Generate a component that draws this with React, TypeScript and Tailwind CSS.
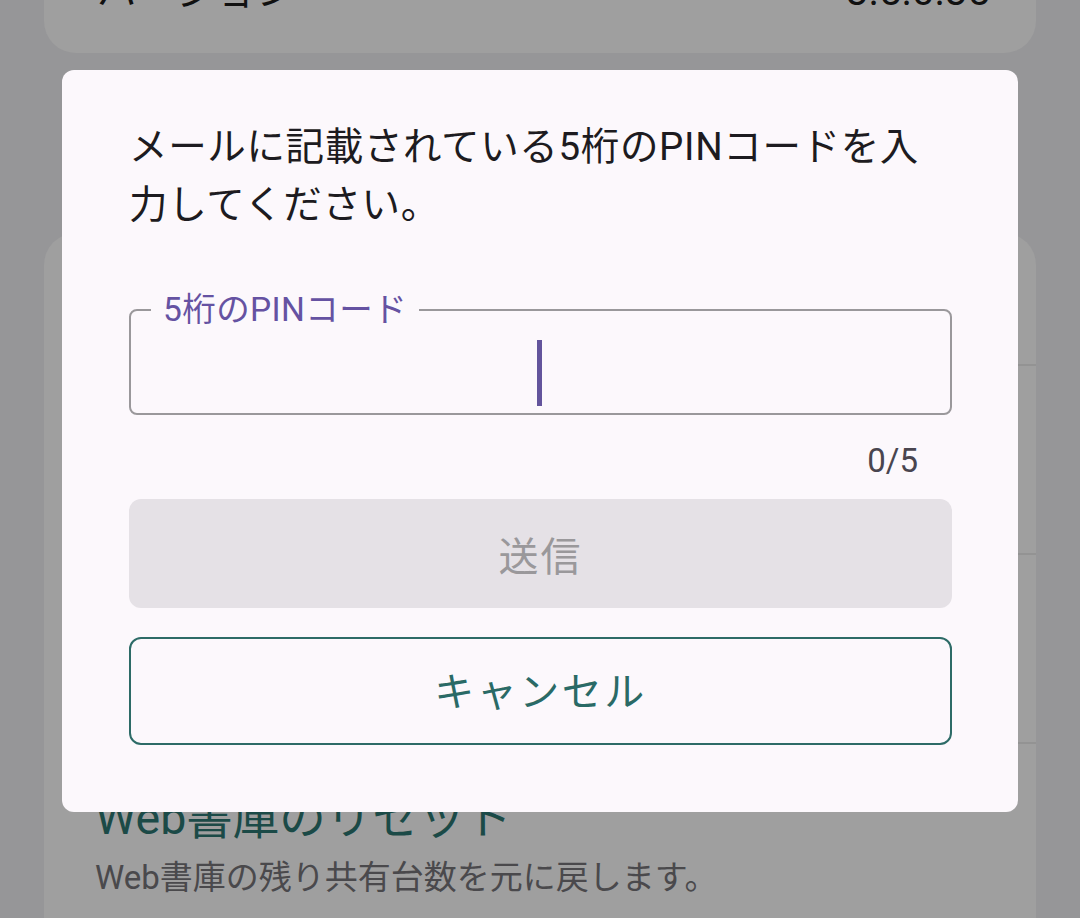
import React from "react";

export default function App() {
  return (
    <div className="relative w-[1080px] h-[918px] overflow-hidden bg-[#969698] font-['Roboto','Noto_Sans_CJK_JP',sans-serif]">
      {/* background page */}
      <div className="flex flex-col px-[44px]">
        <div className="-mt-[80px] rounded-[32px] bg-[#9f9f9f] pt-[48px] pb-[37px] pl-[53px] pr-[46px] flex items-center justify-between">
          <span className="text-[40px] leading-[48px] text-[#111111]">バージョン</span>
          <span className="text-[40px] leading-[48px] text-[#111111]">3.5.0.35</span>
        </div>
        <div className="mt-[180px] rounded-t-[32px] bg-[#9f9f9f] flex flex-col pb-[60px]">
          <div className="h-[131px]" />
          <div className="ml-[51px] h-[2px] bg-[#939393]" />
          <div className="h-[187px]" />
          <div className="ml-[51px] h-[2px] bg-[#939393]" />
          <div className="h-[187px]" />
          <div className="ml-[51px] h-[2px] bg-[#939393]" />
          <div className="pt-[46px] pl-[51px] flex flex-col">
            <span className="text-[46.5px] leading-[56px] text-[#1b4a47]">Web書庫のリセット</span>
            <span className="mt-[10px] text-[33px] leading-[44px] text-[#4a494c]">Web書庫の残り共有台数を元に戻します。</span>
          </div>
        </div>
      </div>

      {/* dialog */}
      <div className="absolute left-[62px] top-[70px] w-[956px] h-[742px] rounded-[12px] bg-[#fcf8fc] pl-[67px] pr-[66px] pt-[48px] flex flex-col">
        <p className="text-[38.5px] leading-[58px] tracking-[0.65px] text-[#1d1b20] whitespace-nowrap">
          メールに記載されている5桁のPINコードを入
          <br />
          力してください。
        </p>

        <div className="relative mt-[75px] h-[106px] rounded-[8px] border-2 border-[#9a989b] flex items-center justify-center">
          <span className="absolute left-[20px] -top-[21px] px-[12px] bg-[#fcf8fc] text-[33.5px] leading-[40px] tracking-[0.4px] text-[#6552a2] whitespace-nowrap">
            5桁のPINコード
          </span>
          <span className="block w-[5px] h-[66px] bg-[#63549c] -ml-[3px] mt-[22px]" />
        </div>

        <div className="mt-[26px] pr-[34px] text-right text-[33px] leading-[40px] text-[#49454f]">0/5</div>

        <div className="mt-[18px] h-[109px] rounded-[12px] bg-[#e5e1e6] flex items-center justify-center pt-[8px]">
          <span className="text-[40px] leading-[44px] tracking-[2px] text-[#9a989b]">送信</span>
        </div>

        <div className="mt-[29px] h-[108px] rounded-[12px] border-2 border-[#2d6b67] flex items-center justify-center pt-[4px]">
          <span className="text-[40px] leading-[44px] tracking-[2.5px] text-[#2a6a66]">キャンセル</span>
        </div>
      </div>
    </div>
  );
}
